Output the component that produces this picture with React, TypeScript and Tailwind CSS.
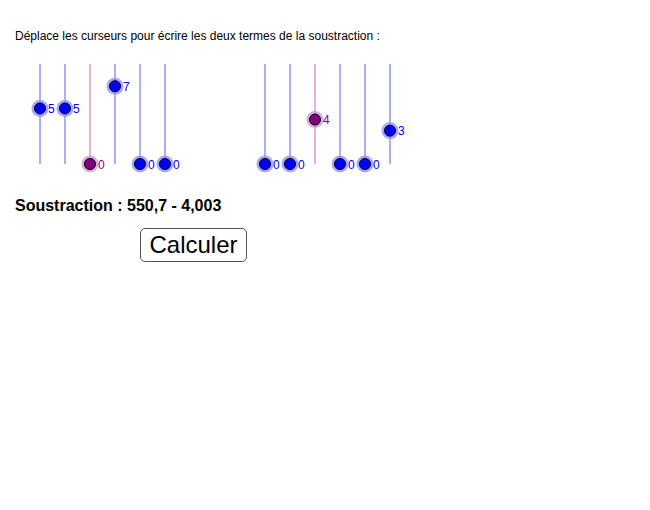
import React from "react";

type S = { x: number; v: number; purple?: boolean };

const left: S[] = [
  { x: 40, v: 5 },
  { x: 65, v: 5 },
  { x: 90, v: 0, purple: true },
  { x: 115, v: 7 },
  { x: 140, v: 0 },
  { x: 165, v: 0 },
];
const right: S[] = [
  { x: 265, v: 0 },
  { x: 290, v: 0 },
  { x: 315, v: 4, purple: true },
  { x: 340, v: 0 },
  { x: 365, v: 0 },
  { x: 390, v: 3 },
];

const OY = 50; // svg top in page coords

function Slider({ s }: { s: S }) {
  const top = 64 - OY;
  const bottom = 164 - OY;
  const y = bottom - (s.v * (bottom - top)) / 9;
  const line = s.purple ? "#d9a0d9" : "#9a9aff";
  const halo = s.purple ? "#cc99cc" : "#9090ff";
  const fill = s.purple ? "#800080" : "#0000ff";
  const txt = s.purple ? "#800080" : "#0000ff";
  return (
    <g>
      <line x1={s.x} y1={top} x2={s.x} y2={bottom} stroke={line} strokeWidth={1.6} />
      <circle cx={s.x} cy={y} r={8.5} fill={halo} opacity={0.8} />
      <circle cx={s.x} cy={y} r={5.5} fill={fill} stroke="#000" strokeWidth={1} />
      <text x={s.x + 8} y={y + 4.5} fontSize={12} fill={txt} fontFamily="Liberation Sans, Arial, sans-serif">
        {s.v}
      </text>
    </g>
  );
}

export default function App() {
  return (
    <div className="w-[650px] h-[510px] bg-white font-['Liberation_Sans',Arial,sans-serif] text-black">
      <p className="pt-[29px] pl-[15px] text-[12px] leading-[14px]">
        Déplace les curseurs pour écrire les deux termes de la soustraction :
      </p>
      <svg width={420} height={130} className="block mt-[7px]">
        {left.map((s, i) => (
          <Slider key={"l" + i} s={s} />
        ))}
        {right.map((s, i) => (
          <Slider key={"r" + i} s={s} />
        ))}
      </svg>
      <p className="mt-[17px] pl-[15px] text-[16px] leading-[18px] font-bold">
        Soustraction : 550,7 - 4,003
      </p>
      <div className="pl-[140px] mt-[13px]">
        <button className="w-[107px] h-[34px] border border-[#555] rounded-[5px] bg-white text-[24px] leading-none flex items-center justify-center">
          Calculer
        </button>
      </div>
    </div>
  );
}
